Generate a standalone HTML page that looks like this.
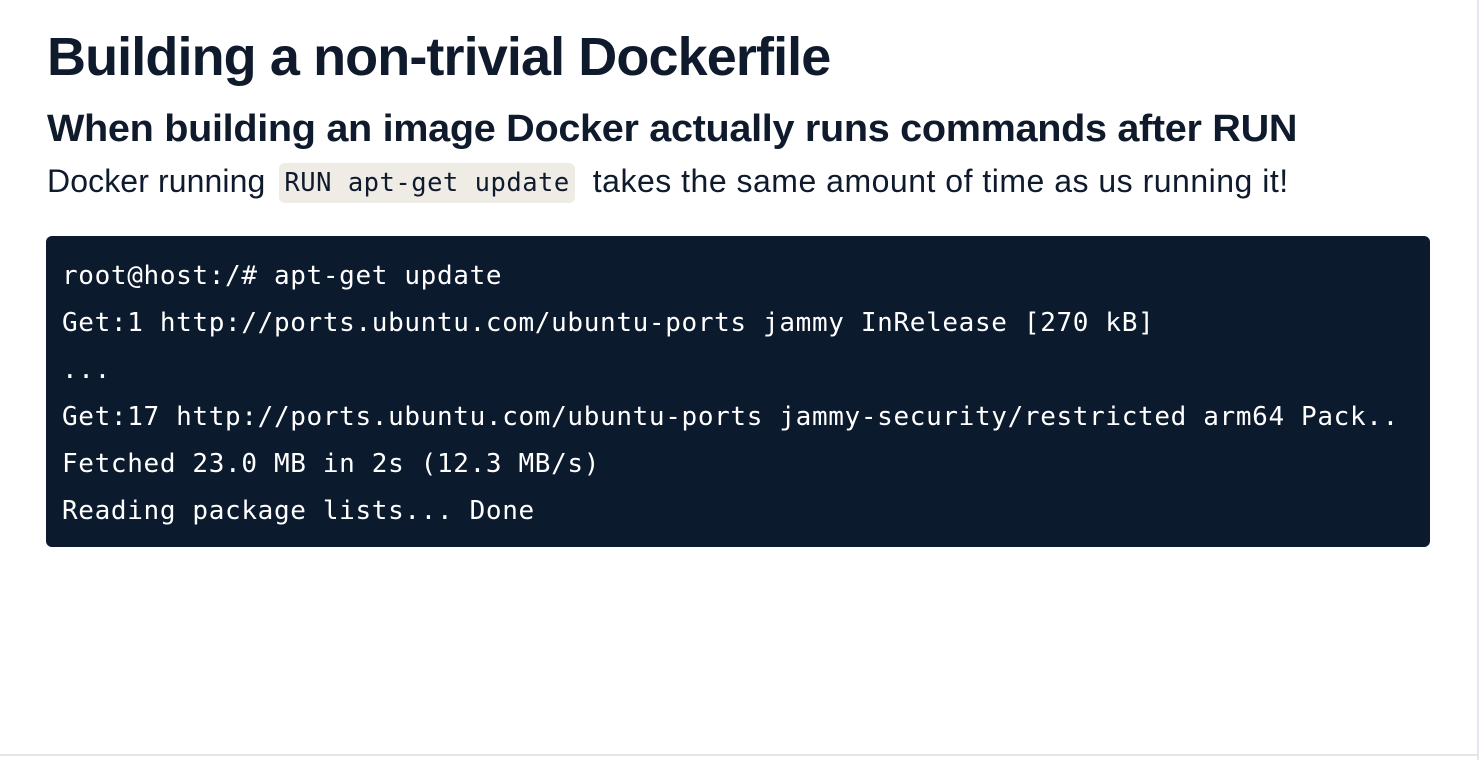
<!DOCTYPE html>
<html><head><meta charset="utf-8"><style>
html,body{margin:0;padding:0;background:#fff;}
body{width:1480px;height:760px;position:relative;overflow:hidden;font-family:"Liberation Sans",sans-serif;color:#0f1b2d;}
.t{position:absolute;left:47px;white-space:nowrap;transform-origin:left top;}
h1{margin:0;font-size:54px;font-weight:bold;top:26px;letter-spacing:-0.9px;}
h2{margin:0;font-size:38px;font-weight:bold;top:108px;letter-spacing:-0.3px;transform:scaleX(1.042);}
.p{font-size:32px;top:161px;line-height:40px;letter-spacing:0.1px;}
.p .r{letter-spacing:0.5px;}
code{font-family:"DejaVu Sans Mono","Liberation Mono",monospace;}
.ic{background:#efebe5;border-radius:6px;padding:4px 5px;font-size:25.5px;letter-spacing:0.5px;margin:0 18px 0 14px;display:inline-block;line-height:32px;height:32px;vertical-align:top;margin-top:2px;}
.blk{position:absolute;left:46px;top:236px;width:1384px;height:311px;background:#0c1a2e;border-radius:6px;}
.blk pre{margin:0;position:absolute;left:16px;top:17px;color:#fff;font-family:"DejaVu Sans Mono","Liberation Mono",monospace;font-size:26px;line-height:47px;letter-spacing:0.65px;}
.bb{position:absolute;left:0;top:754px;width:1477px;height:2px;background:#e8e5e1;}
.rb{position:absolute;left:1477px;top:0;width:2px;height:760px;background:#e6e4ee;}
</style></head><body>
<h1 class="t">Building a non-trivial Dockerfile</h1>
<h2 class="t">When building an image Docker actually runs commands after RUN</h2>
<div class="t p">Docker running<code class="ic">RUN apt-get update</code><span class="r">takes the same amount of time as us running it!</span></div>
<div class="blk"><pre>root@host:/# apt-get update
Get:1 http://ports.ubuntu.com/ubuntu-ports jammy InRelease [270 kB]
...
Get:17 http://ports.ubuntu.com/ubuntu-ports jammy-security/restricted arm64 Pack..
Fetched 23.0 MB in 2s (12.3 MB/s)
Reading package lists... Done</pre></div>
<div class="bb"></div><div class="rb"></div>
</body></html>
